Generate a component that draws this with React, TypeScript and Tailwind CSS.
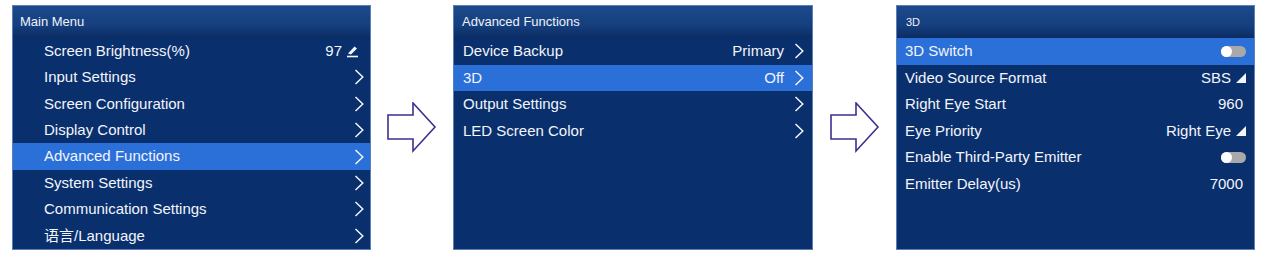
import React from "react";

const Chevron = () => (
  <svg width="10" height="16" viewBox="0 0 10 16" className="shrink-0">
    <polyline points="1.5,1 8.8,8 1.5,15" fill="none" stroke="#f2f5fb" strokeWidth="1.5" />
  </svg>
);

const EditIcon = () => (
  <svg width="13" height="14" viewBox="0 0 13 14" className="shrink-0">
    <polygon points="2,9.5 8.5,2.5 11,4.5 5,10.5" fill="#f2f5fb" />
    <line x1="1" y1="12.5" x2="12" y2="12.5" stroke="#f2f5fb" strokeWidth="1.6" />
  </svg>
);

const Tri = () => (
  <svg width="10" height="10" viewBox="0 0 10 10" className="shrink-0">
    <polygon points="10,0 10,10 0,10" fill="#f2f5fb" />
  </svg>
);

const Toggle = () => (
  <div className="relative w-[25px] h-[11px] rounded-full bg-[#a9a9a9]">
    <div className="absolute left-0 top-0 w-[11px] h-[11px] rounded-full bg-white" />
  </div>
);

const Arrow = () => (
  <svg width="50" height="52" viewBox="0 0 50 52" className="shrink-0">
    <polygon
      points="1,13 26,13 26,1 48,25 26,49 26,37 1,37"
      fill="white"
      stroke="#3b3190"
      strokeWidth="1.6"
      strokeLinejoin="miter"
    />
  </svg>
);

type Row = { label: string; value?: React.ReactNode; active?: boolean };

function Panel({
  title,
  rows,
  indent,
  width,
  titlePad,
  titleClass = "text-[13px]",
}: {
  title: string;
  rows: Row[];
  indent: string;
  width: string;
  titlePad: string;
  titleClass?: string;
}) {
  return (
    <div className={`${width} h-[245px] flex flex-col bg-[#0a2f6d] border border-[#5b7fb8] shrink-0`}>
      <div
        className={`h-[32px] flex items-center ${titlePad} text-[#eef2fa] bg-[linear-gradient(180deg,#1d4a8b_0%,#153f7e_60%,#0b2c63_100%)]`}
      >
        <span className={titleClass}>{title}</span>
      </div>
      {rows.map((r, i) => (
        <div
          key={i}
          className={`h-[26.5px] flex items-center justify-between text-[15px] text-[#f2f5fb] ${indent} ${
            r.active ? "bg-[#2b6fd9]" : ""
          }`}
        >
          <span>{r.label}</span>
          <div className="flex items-center">{r.value}</div>
        </div>
      ))}
    </div>
  );
}

export default function App() {
  const p1: Row[] = [
    {
      label: "Screen Brightness(%)",
      value: (
        <div className="flex items-center gap-[4px] pr-[5px]">
          <span>97</span>
          <EditIcon />
        </div>
      ),
    },
    { label: "Input Settings", value: <Chevron /> },
    { label: "Screen Configuration", value: <Chevron /> },
    { label: "Display Control", value: <Chevron /> },
    { label: "Advanced Functions", value: <Chevron />, active: true },
    { label: "System Settings", value: <Chevron /> },
    { label: "Communication Settings", value: <Chevron /> },
    { label: "语言/Language", value: <Chevron /> },
  ];
  const p2: Row[] = [
    {
      label: "Device Backup",
      value: (
        <div className="flex items-center gap-[10px]">
          <span>Primary</span>
          <Chevron />
        </div>
      ),
    },
    {
      label: "3D",
      value: (
        <div className="flex items-center gap-[10px]">
          <span>Off</span>
          <Chevron />
        </div>
      ),
      active: true,
    },
    { label: "Output Settings", value: <Chevron /> },
    { label: "LED Screen Color", value: <Chevron /> },
  ];
  const p3: Row[] = [
    { label: "3D Switch", value: <Toggle />, active: true },
    {
      label: "Video Source Format",
      value: (
        <div className="flex items-center gap-[5px]">
          <span>SBS</span>
          <Tri />
        </div>
      ),
    },
    { label: "Right Eye Start", value: <span className="pr-[3px]">960</span> },
    {
      label: "Eye Priority",
      value: (
        <div className="flex items-center gap-[5px]">
          <span>Right Eye</span>
          <Tri />
        </div>
      ),
    },
    { label: "Enable Third-Party Emitter", value: <Toggle /> },
    { label: "Emitter Delay(us)", value: <span className="pr-[3px]">7000</span> },
  ];

  return (
    <div
      className="w-[1266px] h-[270px] bg-white flex items-start pt-[5px] pl-[12px]"
      style={{ fontFamily: '"Liberation Sans", Arial, "Noto Sans CJK SC", sans-serif' }}
    >
      <Panel title="Main Menu" rows={p1} width="w-[359px]" titlePad="pl-[7px]" indent="pl-[31px] pr-[6px]" />
      <div className="w-[82px] h-[245px] flex items-center pl-[16px] shrink-0">
        <Arrow />
      </div>
      <Panel title="Advanced Functions" rows={p2} width="w-[360px]" titlePad="pl-[8px]" indent="pl-[9px] pr-[8px]" />
      <div className="w-[83px] h-[245px] flex items-center pl-[17px] shrink-0">
        <Arrow />
      </div>
      <Panel
        title="3D"
        rows={p3}
        width="w-[359px]"
        titlePad="pl-[9px]"
        indent="pl-[8px] pr-[8px]"
        titleClass="text-[11px]"
      />
    </div>
  );
}
